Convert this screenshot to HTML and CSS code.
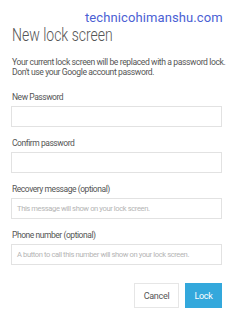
FILE: index.html
```html
<!DOCTYPE html>
<html>
<head>
<meta charset="utf-8">
<link rel="stylesheet" href="styles.css">
</head>
<body>
<div class="dialog">
  <div class="watermark">technicohimanshu.com</div>
  <h1 class="title">New lock screen</h1>
  <p class="desc">Your current lock screen will be replaced with a password lock.<br>Don't use your Google account password.</p>
  <div class="field first">
    <div class="label">New Password</div>
    <div class="input"></div>
  </div>
  <div class="field">
    <div class="label">Confirm password</div>
    <div class="input"></div>
  </div>
  <div class="field">
    <div class="label">Recovery message (optional)</div>
    <div class="input"><span class="ph">This message will show on your lock screen.</span></div>
  </div>
  <div class="field">
    <div class="label">Phone number (optional)</div>
    <div class="input"><span class="ph">A button to call this number will show on your lock screen.</span></div>
  </div>
  <div class="actions">
    <div class="btn cancel">Cancel</div>
    <div class="btn lock">Lock</div>
  </div>
</div>
</body>
</html>
```
FILE: styles.css
```css
html, body { margin: 0; padding: 0; background: #fff; }
body { font-family: Roboto, "Liberation Sans", sans-serif; color: #555; }
.dialog { width: 238px; height: 328px; padding: 12px 16px 0 11px; box-sizing: border-box; display: flex; flex-direction: column; }
.watermark { font-size: 13px; color: #4b5fd4; margin-left: 74px; line-height: 12px; letter-spacing: 0.1px; }
.title { font-size: 17.5px; font-weight: 300; margin: 2px 0 0 1px; line-height: 18px; color: #555; transform: scaleX(0.8); transform-origin: left center; white-space: nowrap; }
.desc { font-size: 8.6px; line-height: 10px; margin: 13px 0 0 1px; color: #555; letter-spacing: -0.4px; white-space: nowrap; }
.field { display: flex; flex-direction: column; }
.label { font-size: 8.5px; line-height: 10px; color: #555; margin: 11px 0 0 1px; letter-spacing: -0.45px; }
.field.first .label { margin-top: 15px; }
.input { height: 21px; border: 1px solid #e2e2e2; box-sizing: border-box; margin-top: 4px; display: flex; align-items: center; padding-left: 5px; }
.ph { font-size: 7.6px; color: #b5b5b5; letter-spacing: -0.4px; white-space: nowrap; }
.actions { display: flex; justify-content: flex-end; gap: 6px; margin-top: 18px; }
.btn { height: 25px; display: flex; align-items: center; justify-content: center; font-size: 9px; box-sizing: border-box; letter-spacing: -0.3px; }
.cancel { width: 45px; border: 1px solid #e6e6e6; color: #555; background: #fff; }
.lock { width: 37px; background: #33a8dc; color: #fff; }
```
